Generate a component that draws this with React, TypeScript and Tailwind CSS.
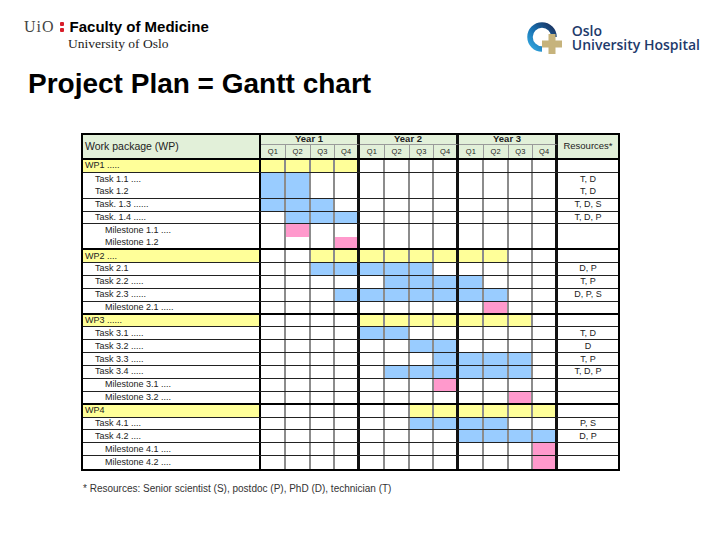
import React from 'react'

type Kind = 'wp' | 'task' | 'ms'
type Line = 'none' | 'thin' | 'thick'

interface Row {
  name: string
  kind: Kind
  from: number
  to: number
  res?: string
  line: Line
}

const rows: Row[] = [
  { name: 'WP1 .....', kind: 'wp', from: 0, to: 3, line: 'thin' },
  { name: 'Task 1.1 ....', kind: 'task', from: 0, to: 1, res: 'T, D', line: 'none' },
  { name: 'Task 1.2', kind: 'task', from: 0, to: 1, res: 'T, D', line: 'thin' },
  { name: 'Task. 1.3 ......', kind: 'task', from: 0, to: 2, res: 'T, D, S', line: 'thin' },
  { name: 'Task. 1.4 .....', kind: 'task', from: 1, to: 3, res: 'T, D, P', line: 'thin' },
  { name: 'Milestone 1.1 ....', kind: 'ms', from: 1, to: 1, line: 'none' },
  { name: 'Milestone 1.2', kind: 'ms', from: 3, to: 3, line: 'thick' },
  { name: 'WP2 ....', kind: 'wp', from: 2, to: 9, line: 'thin' },
  { name: 'Task 2.1', kind: 'task', from: 2, to: 6, res: 'D, P', line: 'thin' },
  { name: 'Task 2.2 .....', kind: 'task', from: 5, to: 8, res: 'T, P', line: 'thin' },
  { name: 'Task 2.3 ......', kind: 'task', from: 3, to: 9, res: 'D, P, S', line: 'thin' },
  { name: 'Milestone 2.1 .....', kind: 'ms', from: 9, to: 9, line: 'thick' },
  { name: 'WP3 ......', kind: 'wp', from: 4, to: 10, line: 'thin' },
  { name: 'Task 3.1 .....', kind: 'task', from: 4, to: 5, res: 'T, D', line: 'thin' },
  { name: 'Task 3.2 .....', kind: 'task', from: 6, to: 7, res: 'D', line: 'thin' },
  { name: 'Task 3.3 .....', kind: 'task', from: 7, to: 10, res: 'T, P', line: 'thin' },
  { name: 'Task 3.4 .....', kind: 'task', from: 5, to: 10, res: 'T, D, P', line: 'thin' },
  { name: 'Milestone 3.1 ....', kind: 'ms', from: 7, to: 7, line: 'thin' },
  { name: 'Milestone 3.2 ....', kind: 'ms', from: 10, to: 10, line: 'thick' },
  { name: 'WP4', kind: 'wp', from: 6, to: 11, line: 'thin' },
  { name: 'Task 4.1 ....', kind: 'task', from: 6, to: 9, res: 'P, S', line: 'thin' },
  { name: 'Task 4.2 ....', kind: 'task', from: 8, to: 11, res: 'D, P', line: 'thin' },
  { name: 'Milestone 4.1 ....', kind: 'ms', from: 11, to: 11, line: 'thin' },
  { name: 'Milestone 4.2 ....', kind: 'ms', from: 11, to: 11, line: 'none' },
]

const cols = 'grid grid-cols-[178px_repeat(12,24.75px)_1fr]'

const fill: Record<Kind, string> = {
  wp: 'bg-[#ffff99]',
  task: 'bg-[#99ccff]',
  ms: 'bg-[#ff99cc]',
}

const lineClass: Record<Line, string> = {
  none: '',
  thin: 'border-b border-[#222]',
  thick: 'border-b-2 border-black',
}

const indent: Record<Kind, string> = {
  wp: 'pl-[2px]',
  task: 'pl-[12px]',
  ms: 'pl-[22px]',
}

function qBorder(i: number) {
  return i % 4 === 3 ? 'border-r-[3px] border-[#111]' : 'border-r-2 border-[#8c8c8c]'
}

function OusLogo() {
  return (
    <svg width="40" height="40" viewBox="0 0 40 40">
      <defs>
        <linearGradient id="ring" x1="0" y1="1" x2="1" y2="0">
          <stop offset="0" stopColor="#35a9e0" />
          <stop offset="0.45" stopColor="#1772b3" />
          <stop offset="1" stopColor="#1b2f5c" />
        </linearGradient>
      </defs>
      <path d="M 29 19 A 12 12 0 1 0 17 31" fill="none" stroke="url(#ring)" strokeWidth="5.5" />
      <rect x="17" y="22.5" width="20" height="7" fill="#c6b37c" />
      <rect x="23.5" y="16" width="7" height="20" fill="#c6b37c" />
    </svg>
  )
}

export default function App() {
  return (
    <div className="w-[720px] h-[540px] bg-white overflow-hidden font-['Liberation_Sans',Arial,sans-serif] text-black">
      {/* Logos */}
      <div className="flex justify-between h-[66px]">
        <div className="pl-[24px] pt-[19px]">
          <div className="flex items-baseline leading-none">
            <span className="font-['Liberation_Serif',serif] text-[16px] text-[#444] tracking-[1px]">UiO</span>
            <span className="flex flex-col gap-[2px] ml-[5px] mr-[6px] self-center">
              <span className="w-[4px] h-[4px] rounded-[1px] bg-[#d81e2a]" />
              <span className="w-[4px] h-[4px] rounded-[1px] bg-[#d81e2a]" />
            </span>
            <span className="text-[15px] font-bold">Faculty of Medicine</span>
          </div>
          <div className="ml-[44px] mt-[2px] font-['Liberation_Serif',serif] text-[13.5px] leading-none text-[#222]">
            University of Oslo
          </div>
        </div>
        <div className="flex items-center gap-[7px] pt-[18px] pr-[20px] h-fit">
          <OusLogo />
          <div className="font-['Open_Sans',sans-serif] font-semibold text-[14px] leading-[14px] text-[#1e3a6b]">
            <div>Oslo</div>
            <div>University Hospital</div>
          </div>
        </div>
      </div>

      <h1 className="ml-[28px] mt-[4px] text-[28px] leading-none font-bold">Project Plan = Gantt chart</h1>

      {/* Gantt table */}
      <div className="ml-[81px] mt-[35px] w-[539px] border-2 border-black text-[#222]">
        <div className={`${cols} grid-rows-[10px_13px] h-[25px] border-b-2 border-black bg-[#e2f0d9]`}>
          <div className="row-span-2 flex items-center pl-[2px] text-[10.5px] border-r-2 border-black">Work package (WP)</div>
          {['Year 1', 'Year 2', 'Year 3'].map((y) => (
            <div
              key={y}
              className="col-span-4 flex items-center justify-center text-[9.5px] font-bold border-r-[3px] border-[#111] border-b border-b-[#9a9a9a]"
            >
              {y}
            </div>
          ))}
          <div className="row-span-2 flex items-center justify-center text-[9.5px]">Resources*</div>
          {Array.from({ length: 12 }).map((_, i) => (
            <div
              key={i}
              className={`flex items-center justify-center text-[7.5px] ${
                i % 4 === 3 ? 'border-r-[3px] border-[#111]' : 'border-r border-[#9a9a9a]'
              }`}
            >
              Q{(i % 4) + 1}
            </div>
          ))}
        </div>

        {rows.map((r) => (
          <div key={r.name} className={`${cols} h-[12.875px] ${lineClass[r.line]}`}>
            <div
              className={`flex items-center text-[9px] leading-none border-r-2 border-black ${indent[r.kind]} ${
                r.kind === 'wp' ? 'bg-[#ffff99]' : ''
              }`}
            >
              {r.name}
            </div>
            {Array.from({ length: 12 }).map((_, i) => (
              <div key={i} className={`${qBorder(i)} ${i >= r.from && i <= r.to ? fill[r.kind] : ''}`} />
            ))}
            <div className="flex items-center justify-center text-[9px] leading-none">{r.res ?? ''}</div>
          </div>
        ))}
      </div>

      <p className="ml-[83px] mt-[13px] text-[10px] leading-none text-[#333]">
        * Resources: Senior scientist (S), postdoc (P), PhD (D), technician (T)
      </p>
    </div>
  )
}
